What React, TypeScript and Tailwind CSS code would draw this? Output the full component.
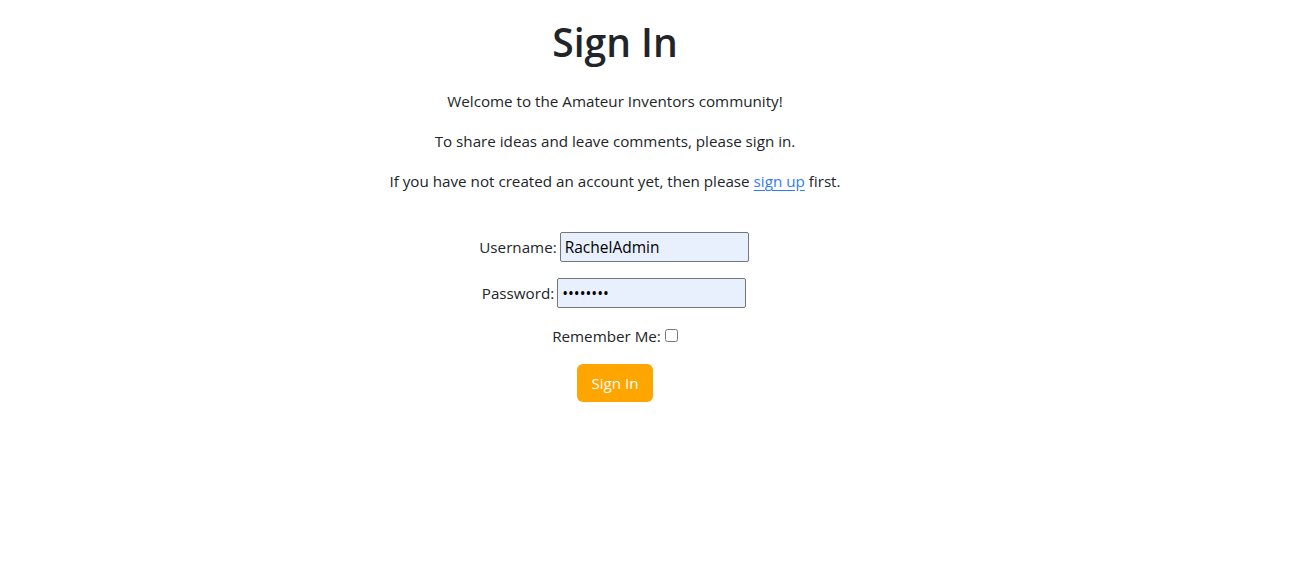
import React from "react";

export default function App() {
  return (
    <div className="min-h-[576px] w-full bg-white text-[#212529] text-[15.2px] leading-6" style={{ fontFamily: '"Open Sans", "Noto Sans", sans-serif' }}>
      <div className="w-[1230px] text-center pt-[18px]">
        <h1 className="text-[39px] leading-[48px] font-semibold mb-[23px]">Sign In</h1>
        <p className="mb-4">Welcome to the Amateur Inventors community!</p>
        <p className="mb-4">To share ideas and leave comments, please sign in.</p>
        <p>
          If you have not created an account yet, then please{" "}
          <a href="#" className="text-[#2f7cf6] underline underline-offset-[3px]">sign up</a> first.
        </p>
        <form className="mt-[39px]" onSubmit={(e) => e.preventDefault()}>
          <div className="flex items-center justify-center h-[30px] mb-4 pr-[2px]">
            <label htmlFor="id_login">Username:</label>
            <input
              id="id_login"
              type="text"
              defaultValue="RachelAdmin"
              className="ml-[3px] w-[189px] h-[30px] px-[4px] border border-[#767676] rounded-[2px] bg-[#e8f0fe] text-black text-[15.5px]"
            />
          </div>
          <div className="flex items-center justify-center h-[30px] mb-4 pr-[2px]">
            <label htmlFor="id_password">Password:</label>
            <input
              id="id_password"
              type="password"
              defaultValue="password"
              className="ml-[3px] w-[189px] h-[30px] px-[4px] border border-[#767676] rounded-[2px] bg-[#e8f0fe] text-black text-[15.5px]"
            />
          </div>
          <div className="flex items-center justify-center h-6 mb-4">
            <label htmlFor="id_remember">Remember Me:</label>
            <input id="id_remember" type="checkbox" className="ml-1 w-[13px] h-[13px] mt-[-1px]" />
          </div>
          <button type="submit" className="bg-[#ffa500] text-white px-[14px] h-[38px] rounded-md">
            Sign In
          </button>
        </form>
      </div>
    </div>
  );
}
